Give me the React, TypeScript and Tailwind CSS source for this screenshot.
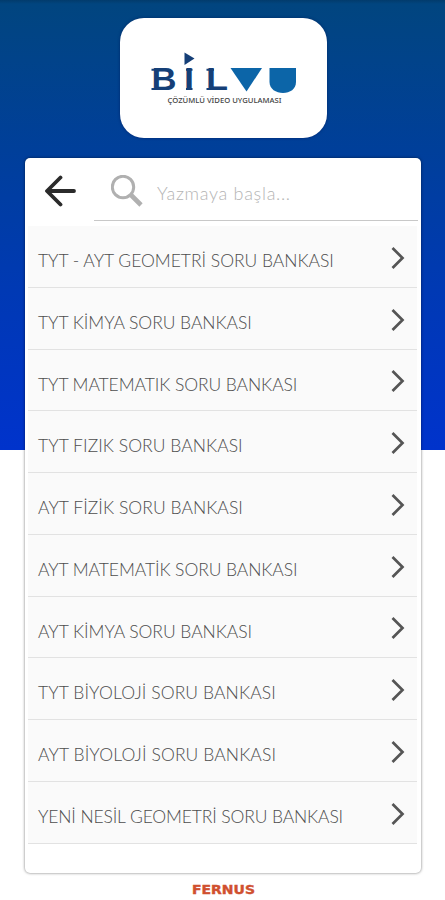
import React from 'react'

const books = [
    { title: 'TYT - AYT GEOMETRİ SORU BANKASI', spacing: 'tracking-[-0.03px]' },
    { title: 'TYT KİMYA SORU BANKASI', spacing: 'tracking-[-0.04px]' },
    { title: 'TYT MATEMATIK SORU BANKASI', spacing: 'tracking-[-0.08px]' },
    { title: 'TYT FIZIK SORU BANKASI', spacing: 'tracking-[0.05px]' },
    { title: 'AYT FİZİK SORU BANKASI', spacing: 'tracking-[0.05px]' },
    { title: 'AYT MATEMATİK SORU BANKASI', spacing: 'tracking-[-0.08px]' },
    { title: 'AYT KİMYA SORU BANKASI', spacing: 'tracking-[-0.04px]' },
    { title: 'TYT BİYOLOJİ SORU BANKASI', spacing: 'tracking-[0.1px]' },
    { title: 'AYT BİYOLOJİ SORU BANKASI', spacing: 'tracking-[0.1px]' },
    { title: 'YENİ NESİL GEOMETRİ SORU BANKASI', spacing: 'tracking-[-0.14px]' },
]

export default function App() {
    return (
        <div className="h-[900px] w-full overflow-hidden bg-[linear-gradient(to_bottom,#023b6c_0px,#01457f_4px,#01438a_60px,#003f9a_150px,#0039b4_290px,#0033cc_450px,#fff_450px)] font-['Lato','Noto_Sans',sans-serif]">
            <header className="flex justify-center pt-[18px] pl-px">
                <div className="h-[120px] w-[207px] rounded-[24px] bg-white shadow-[0_0_3px_rgba(0,20,80,0.6)]">
                    <Logo />
                </div>
            </header>
            <main className="mt-5 ml-[25px] h-[715px] w-[396px] rounded-[5px] bg-white px-[3px] shadow-[0_0_3px_rgba(0,0,0,0.55)]">
                <div className="flex h-[68px]">
                    <button className="flex h-[66px] w-[66px] items-center pl-[17px]">
                        <BackIcon />
                    </button>
                    <div className="flex h-[63px] flex-1 items-center border-b border-[#c8c8c8] pt-[3px] pl-[17px]">
                        <SearchIcon />
                        <span className="ml-[14px] pt-1 text-[18px] leading-none font-light tracking-[0.7px] text-[#b4b4b4]">Yazmaya başla...</span>
                    </div>
                </div>
                <ul className="w-[389px]">
                    {books.map((book) => (
                        <li key={book.title} className="flex h-[61.75px] items-center justify-between border-b border-[#e2e2e2] bg-[#fafafa] pr-3 pl-[10px]">
                            <span className={`pt-[9px] text-[17.5px] leading-none font-light whitespace-nowrap text-[#4d4d4d] ${book.spacing}`}>{book.title}</span>
                            <ChevronIcon />
                        </li>
                    ))}
                </ul>
            </main>
            <footer className="mt-[10px] flex justify-center">
                <svg width="64" height="14" viewBox="0 0 64 14">
                    <text x="1" y="11" textLength="63" lengthAdjust="spacingAndGlyphs" className="fill-[#d0502f] stroke-[#d0502f] stroke-[0.4px] font-['DejaVu_Sans',sans-serif] text-[12.5px] font-bold">FERNUS</text>
                </svg>
            </footer>
        </div>
    )
}

function Logo() {
    return (
        <svg width="207" height="120" viewBox="0 0 207 120">
            <g className="fill-[#153f77] font-['Liberation_Sans',sans-serif] text-[31px] font-bold">
                <text x="31.500" y="72" textLength="25" lengthAdjust="spacingAndGlyphs">B</text>
                <text x="64" y="72" textLength="10" lengthAdjust="spacingAndGlyphs">I</text>
                <text x="86" y="72" textLength="22" lengthAdjust="spacingAndGlyphs">L</text>
            </g>
            {/* short slabs on the letter stems */}
            <path d="M31.500 50.700h4v2h-4zM31.500 70h4v2h-4zM66 50.700h6.500v2H66zM66 70h6.500v2H66zM86.500 50.700h7.500v2h-7.500zM86.500 70h4v2h-4z" fill="#153f77" />
            <path d="M64.500 34.500V47L74.500 40.500Z" fill="#153f77" />
            <path d="M110.500 50H142L126.500 73.500Z" fill="#0c65a8" />
            <path d="M149.500 50H176V64C176 71 170 75 163 75S149.500 71 149.500 64Z" fill="#0c65a8" />
            <text x="47.500" y="85" textLength="114" lengthAdjust="spacingAndGlyphs" className="fill-[#444] font-['Noto_Sans',sans-serif] text-[7.5px] font-medium">ÇÖZÜMLÜ VİDEO UYGULAMASI</text>
        </svg>
    )
}

function BackIcon() {
    return (
        <svg width="34" height="34" viewBox="0 0 34 34" fill="none" stroke="#2b2b2b" strokeWidth="3.800" strokeLinecap="round" strokeLinejoin="round">
            <path d="M29 17H2.500M15.500 3.500L2 17L15.500 30.500" />
        </svg>
    )
}

function SearchIcon() {
    return (
        <svg width="32" height="32" viewBox="0 0 32 32" fill="none" stroke="#b0b0b0">
            <circle cx="12" cy="12" r="10.700" strokeWidth="3" />
            <path d="M19.500 19.500L30 30" strokeWidth="4.600" />
        </svg>
    )
}

function ChevronIcon() {
    return (
        <svg className="mt-[3px]" width="14" height="22" viewBox="0 0 14 22" fill="none" stroke="#555" strokeWidth="2.700">
            <path d="M1.500 1L11.500 11L1.500 21" />
        </svg>
    )
}
